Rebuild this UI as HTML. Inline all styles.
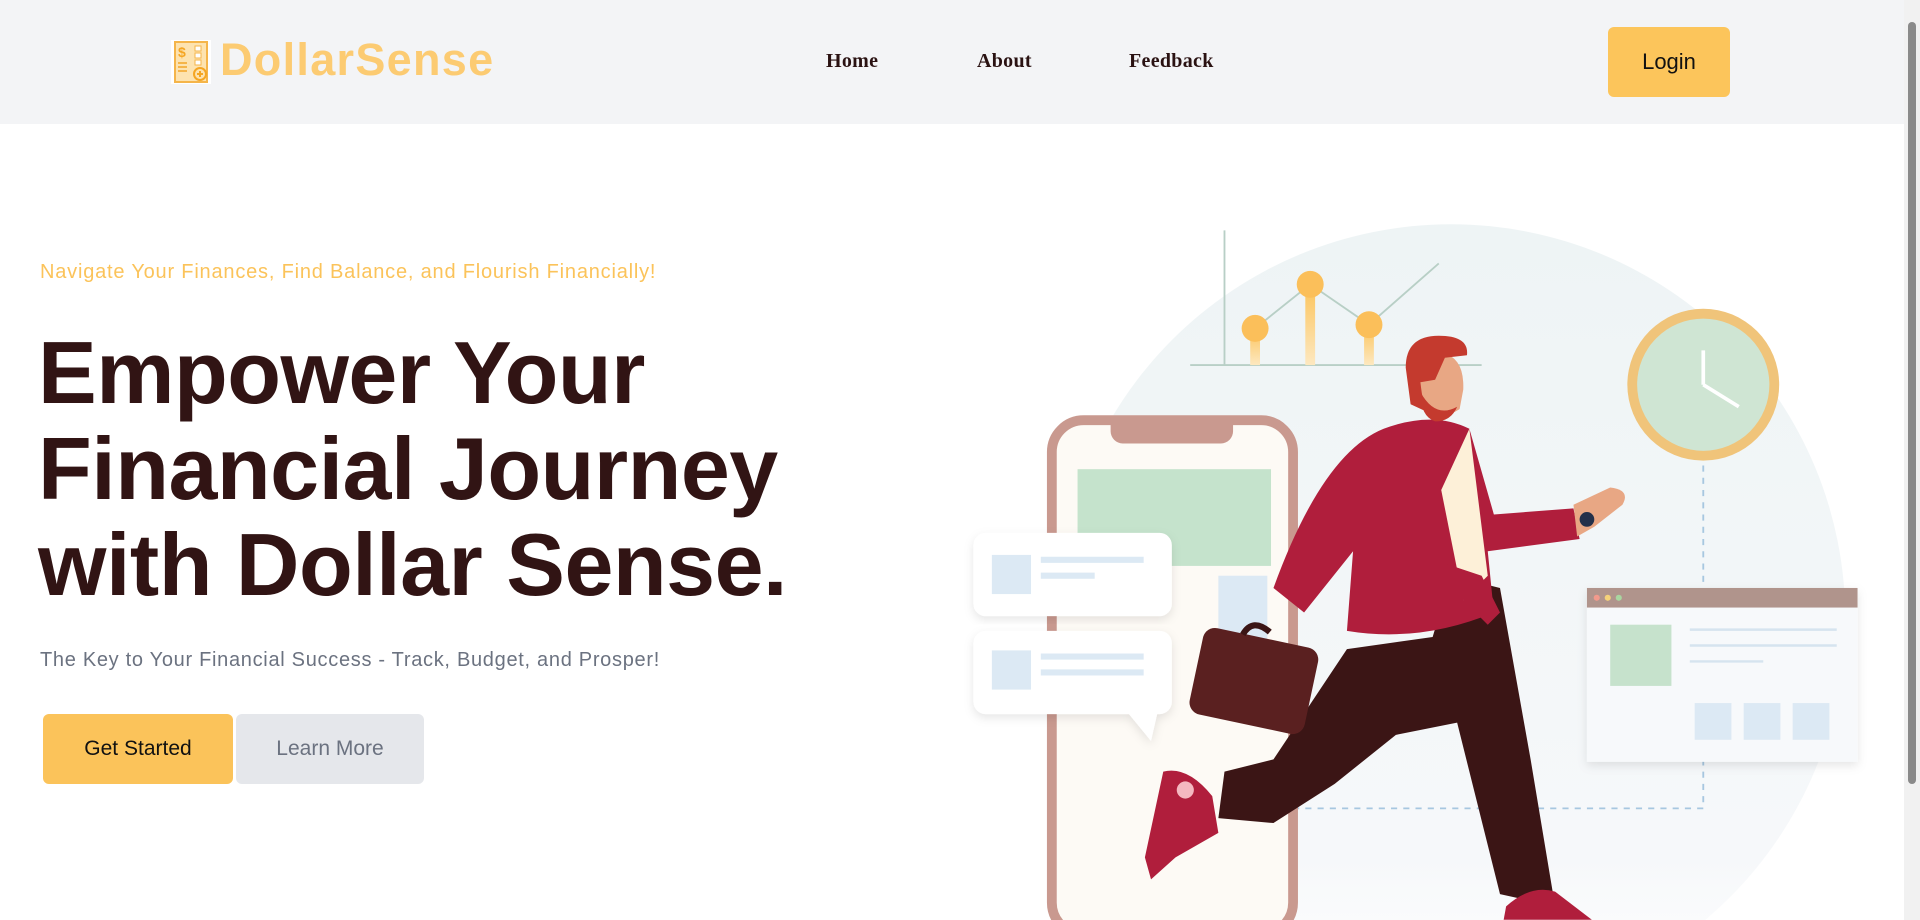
<!DOCTYPE html>
<html><head><meta charset="utf-8"><style>
*{margin:0;padding:0;box-sizing:border-box}
html,body{width:1920px;height:920px;overflow:hidden}
body{background:#fff;font-family:"Liberation Sans",sans-serif;position:relative}
.hdr{position:absolute;left:0;top:0;width:1904px;height:124px;background:#f3f4f6}
.logo{position:absolute;left:220px;top:34px;font-size:45px;font-weight:bold;color:#fccb72;letter-spacing:1.3px}
.nav{position:absolute;top:50px;font-family:"Liberation Serif",serif;font-weight:bold;font-size:20px;color:#2a1212;letter-spacing:0.3px}
.login{position:absolute;left:1608px;top:27px;width:122px;height:70px;background:#fcc55b;border-radius:6px;font-size:22px;color:#111;display:flex;align-items:center;justify-content:center}
.tag{position:absolute;left:40px;top:261px;font-size:20px;color:#fbc35a;letter-spacing:0.8px}
h1{position:absolute;left:38px;top:325px;font-size:88px;line-height:96px;color:#311414;font-weight:bold;letter-spacing:-0.5px}
.sub{position:absolute;left:40px;top:649px;font-size:20px;color:#6b7280;letter-spacing:0.7px}
.btn{position:absolute;top:714px;height:70px;border-radius:6px;font-size:21px;display:flex;align-items:center;justify-content:center}
.sb{position:absolute;right:0;top:0;width:16px;height:920px;background:#f1f1f1}
.sb div{position:absolute;left:4px;top:22px;width:8px;height:762px;background:#8a8a8a;border-radius:4px}
</style></head><body>
<div class="hdr">
<svg style="position:absolute;left:171px;top:40px" width="40" height="44" viewBox="0 0 40 44"><rect width="40" height="44" fill="#fff"/><rect x="4" y="2" width="32" height="40" fill="#fde3b0" stroke="#f5b54a" stroke-width="2"/><text x="7" y="17" font-size="14" font-weight="bold" fill="#f5a623" font-family="Liberation Sans">$</text><rect x="7" y="22" width="9" height="2" fill="#f5b54a"/><rect x="7" y="26" width="9" height="2" fill="#f5b54a"/><rect x="7" y="30" width="9" height="2" fill="#f5b54a"/><rect x="24" y="6" width="6" height="5" fill="#fff" stroke="#f5b54a"/><rect x="24" y="13" width="6" height="5" fill="#fff" stroke="#f5b54a"/><rect x="24" y="20" width="6" height="5" fill="#fff" stroke="#f5b54a"/><circle cx="29" cy="34" r="6" fill="#fde3b0" stroke="#f5a623" stroke-width="2"/><path d="M29 31v6M26 34h6" stroke="#f5a623" stroke-width="2"/></svg>
<div class="logo">DollarSense</div>
<div class="nav" style="left:826px">Home</div>
<div class="nav" style="left:977px">About</div>
<div class="nav" style="left:1129px">Feedback</div>
<div class="login">Login</div>
</div>
<div class="tag">Navigate Your Finances, Find Balance, and Flourish Financially!</div>
<h1>Empower Your<br>Financial Journey<br>with Dollar Sense.</h1>
<div class="sub">The Key to Your Financial Success - Track, Budget, and Prosper!</div>
<div class="btn" style="left:43px;width:190px;background:#fbc35a;color:#111">Get Started</div>
<div class="btn" style="left:236px;width:188px;background:#e5e7eb;color:#6b7280">Learn More</div>

<svg style="position:absolute;left:0;top:0" width="1920" height="920" viewBox="0 0 1568 751">
<defs>
<linearGradient id="bg" x1="0" y1="0" x2="0" y2="1"><stop offset="0" stop-color="#eef4f5"/><stop offset="0.8" stop-color="#f6f8fa"/><stop offset="1" stop-color="#fff"/></linearGradient>
<linearGradient id="bar" x1="0" y1="0" x2="0" y2="1"><stop offset="0" stop-color="#fbc35a"/><stop offset="1" stop-color="#fde8c0"/></linearGradient>
<filter id="sh"><feDropShadow dx="0" dy="3" stdDeviation="4" flood-color="#000" flood-opacity="0.1"/></filter>
</defs>
<circle cx="1185" cy="505" r="322" fill="url(#bg)"/>
<path d="M1000 188V298M972 298H1210" stroke="#b8cfc6" stroke-width="1.5"/>
<polyline points="1025,268 1070,232 1118,265 1175,215" fill="none" stroke="#b8cfc6" stroke-width="1.5"/>
<rect x="1021" y="268" width="8" height="30" fill="url(#bar)"/><rect x="1066" y="232" width="8" height="66" fill="url(#bar)"/><rect x="1114" y="265" width="8" height="33" fill="url(#bar)"/>
<circle cx="1025" cy="268" r="11" fill="#fbbf5a"/><circle cx="1070" cy="232" r="11" fill="#fbbf5a"/><circle cx="1118" cy="265" r="11" fill="#fbbf5a"/>
<circle cx="1391" cy="314" r="62" fill="#f0c47a"/><circle cx="1391" cy="314" r="54" fill="#cfe5d3"/>
<path d="M1391 314V286M1391 314L1420 332" stroke="#fff" stroke-width="3"/>
<path d="M1391 380V660H880V580" stroke="#a7c7e0" stroke-width="1.5" stroke-dasharray="5 5" fill="none"/>
<rect x="1296" y="480" width="221" height="142" fill="#f7f9fb" filter="url(#sh)"/><rect x="1296" y="480" width="221" height="16" fill="#b0948c"/>
<circle cx="1304" cy="488" r="2.5" fill="#f29a8c"/><circle cx="1313" cy="488" r="2.5" fill="#f5d27a"/><circle cx="1322" cy="488" r="2.5" fill="#a9d6a0"/>
<rect x="1315" y="510" width="50" height="50" fill="#c6e2cc"/>
<path d="M1380 514H1500M1380 527H1500M1380 540H1440" stroke="#d6e4ef" stroke-width="2"/>
<rect x="1384" y="574" width="30" height="30" fill="#dce9f4"/><rect x="1424" y="574" width="30" height="30" fill="#dce9f4"/><rect x="1464" y="574" width="30" height="30" fill="#dce9f4"/>
<rect x="859" y="343" width="197" height="420" rx="26" fill="#fdfaf5" stroke="#c9998f" stroke-width="8"/>
<path d="M907 340h100v12a10 10 0 0 1-10 10h-80a10 10 0 0 1-10-10z" fill="#c9998f"/>
<rect x="880" y="383" width="158" height="79" fill="#c5e3cc"/>
<rect x="995" y="470" width="40" height="60" fill="#dce9f4"/>
<rect x="795" y="435" width="162" height="68" rx="10" fill="#fff" filter="url(#sh)"/>
<rect x="810" y="453" width="32" height="32" fill="#dce9f4"/><path d="M850 457H934M850 470H894" stroke="#dce9f4" stroke-width="5"/>
<path d="M805 515h142a10 10 0 0 1 10 10v48a10 10 0 0 1-10 10h-2l-5 22-18-22H805a10 10 0 0 1-10-10v-48a10 10 0 0 1 10-10z" fill="#fff" filter="url(#sh)"/>
<rect x="810" y="531" width="32" height="32" fill="#dce9f4"/><path d="M850 536H934M850 549H934" stroke="#dce9f4" stroke-width="5"/>
<path d="M1185 470L1170 520L1100 530L1040 620L1000 630L995 668L1040 672L1090 640L1140 600L1190 590L1225 730L1270 740L1250 620L1225 480Z" fill="#3b1515"/>
<path d="M1130 350Q1170 335 1200 350L1220 420L1285 415L1290 440L1215 450L1220 500Q1160 525 1100 515L1105 450L1065 500L1040 480Q1080 370 1130 350Z" fill="#b01e3c"/>
<path d="M1177 400L1200 350L1215 470L1195 490Z" fill="#fdf0d8"/>
<path d="M1180 460L1195 490L1215 510L1225 500L1210 470Z" fill="#b01e3c"/>
<path d="M1285 412L1315 398Q1332 400 1325 412L1302 430L1288 438Z" fill="#e8a784"/>
<circle cx="1296" cy="424" r="6" fill="#23304a"/>
<path d="M1160 300Q1160 285 1178 288Q1196 292 1195 318L1192 334Q1180 342 1168 336L1160 325Z" fill="#e8a784"/>
<path d="M1148 300Q1148 274 1175 274Q1200 274 1198 290L1180 292L1172 310L1160 312Q1162 330 1165 336L1152 330Z" fill="#c43a2e"/>
<path d="M1160 320Q1172 342 1190 332Q1185 344 1172 344Q1160 340 1160 320Z" fill="#c43a2e"/>
<rect x="976" y="520" width="96" height="72" rx="10" fill="#5a2020" transform="rotate(12 1024 556)"/>
<path d="M1015 518q8-14 22-2" stroke="#3b1515" stroke-width="5" fill="none"/>
<path d="M950 630Q970 625 990 650L995 680L960 700L940 718L935 700Z" fill="#b01e3c"/>
<circle cx="968" cy="645" r="7" fill="#f4b8c0"/>
<path d="M1230 740Q1250 722 1270 728L1300 751H1228Z" fill="#b01e3c"/>
</svg>
<div class="sb"><div></div></div>
</body></html>
